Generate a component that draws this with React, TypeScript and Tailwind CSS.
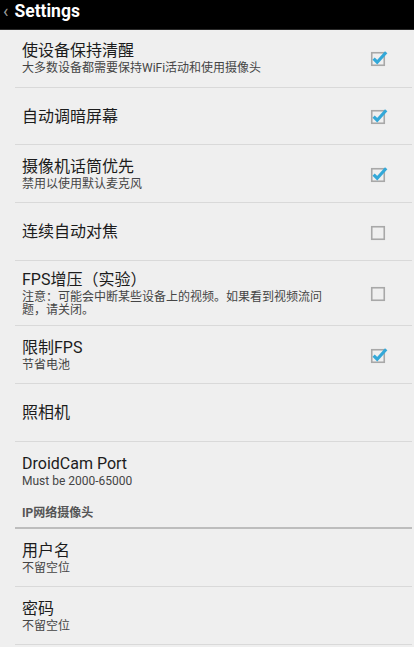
import React from "react";

const font = { fontFamily: "Roboto, 'Noto Sans CJK SC', sans-serif" };

function Check({ checked }: { checked: boolean }) {
  return (
    <svg width="20" height="20" viewBox="0 0 20 20" className="block">
      <rect x="2.75" y="4.75" width="12.5" height="12.5" fill="none" stroke="#a8a8a8" strokeWidth="1.6" />
      {checked && (
        <path d="M4.6 10.6 L8.2 14.2 L17.2 4.2" fill="none" stroke="#33a8d8" strokeWidth="3.2" strokeLinecap="butt" strokeLinejoin="miter" />
      )}
    </svg>
  );
}

type RowProps = {
  title: string;
  sub?: string;
  checkbox?: boolean;
  checked?: boolean;
  h: string;
  border?: boolean;
};

function Row({ title, sub, checkbox, checked, h, border = true }: RowProps) {
  return (
    <div className={`ml-[15px] mr-[2px] ${border ? "border-b border-[#d9d9d9]" : ""}`}>
      <div className={`${h} flex items-center justify-between pl-[7px]`}>
        <div className="max-w-[318px]">
          <div className="text-[16px] leading-[21px] text-[#1c1c1c]">{title}</div>
          {sub && <div className="mt-[1px] text-[12px] leading-[13.5px] text-[#454545]">{sub}</div>}
        </div>
        {checkbox && (
          <div className="mr-[23px]">
            <Check checked={!!checked} />
          </div>
        )}
      </div>
    </div>
  );
}

export default function App() {
  return (
    <div className="w-[414px] h-[647px] overflow-hidden bg-[#efefef]" style={font}>
      <div className="h-[30px] bg-black flex items-start border-b border-[#2a2a2a]">
        <span className="ml-[3px] mt-[1px] text-[18px] leading-[20px] text-[#9a9a9a]">‹</span>
        <span className="ml-[6px] mt-[1px] text-[17.5px] leading-[20px] font-bold text-white">Settings</span>
      </div>
      <div className="-mt-[1px]">
        <Row h="h-[58px]" title="使设备保持清醒" sub="大多数设备都需要保持WiFi活动和使用摄像头" checkbox checked />
        <Row h="h-[56px]" title="自动调暗屏幕" checkbox checked />
        <Row h="h-[57px]" title="摄像机话筒优先" sub="禁用以使用默认麦克风" checkbox checked />
        <Row h="h-[57px]" title="连续自动对焦" checkbox checked={false} />
        <Row h="h-[64px]" title="FPS增压（实验）" sub="注意：可能会中断某些设备上的视频。如果看到视频流问题，请关闭。" checkbox checked={false} />
        <Row h="h-[57px]" title="限制FPS" sub="节省电池" checkbox checked />
        <Row h="h-[57px]" title="照相机" />
        <Row h="h-[57px]" title="DroidCam Port" sub="Must be 2000-65000" border={false} />
        <div className="ml-[15px] mr-[2px] h-[30px] border-b-2 border-[#bdbdbd] flex items-center pl-[7px]">
          <span className="text-[12px] font-bold text-[#555]">IP网络摄像头</span>
        </div>
        <Row h="h-[57px]" title="用户名" sub="不留空位" />
        <Row h="h-[57px]" title="密码" sub="不留空位" />
      </div>
    </div>
  );
}
